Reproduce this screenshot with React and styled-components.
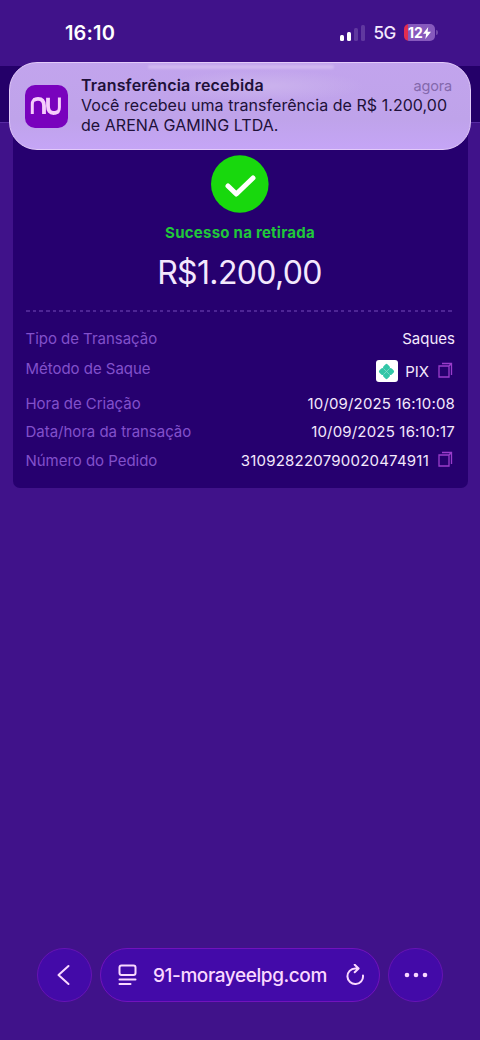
import React from "react";
import styled, { createGlobalStyle } from "styled-components";

const GlobalStyle = createGlobalStyle`
  * { box-sizing: border-box; }
  body {
    margin: 0;
    background: #40128a;
    font-family: Inter, "Liberation Sans", sans-serif;
  }
`;

const Screen = styled.div`
  position: relative;
  display: flex;
  flex-direction: column;
  width: 480px;
  height: 1040px;
  overflow: hidden;
  background: #40128a;
  color: #f4e8fd;
  white-space: nowrap;
`;

const StatusBar = styled.header`
  display: flex;
  flex: none;
  justify-content: space-between;
  align-items: center;
  height: 66px;
  padding: 0 42px 0 65px;
`;

const Clock = styled.span`
  font-size: 20px;
  font-weight: 600;
  letter-spacing: 0.15px;
  color: #fff;
`;

const StatusIcons = styled.div`
  display: flex;
  align-items: center;
  margin-top: -1px;
`;

const Signal = styled.div`
  display: flex;
  align-items: flex-end;
  gap: 3px;
  height: 16px;
  margin-right: 8px;
`;

const Bar = styled.i`
  width: 4px;
  height: ${(p) => p.$h}px;
  border-radius: 1.5px;
  background: ${(p) => (p.$on ? "#fff" : "#60389f")};
`;

const Network = styled.span`
  margin-right: 8px;
  padding-top: 1px;
  font-size: 17px;
  font-weight: 500;
  letter-spacing: -0.3px;
`;

const Battery = styled.div`
  display: flex;
  align-items: center;
  justify-content: center;
  width: 31px;
  height: 17px;
  border-radius: 5px;
  background: linear-gradient(90deg, #e22d50 4px, #8659bd 4px);
  color: #fff;
  font-size: 14px;
  font-weight: 700;
`;

const BatteryTip = styled.i`
  width: 2px;
  height: 5px;
  margin-left: 1px;
  border-radius: 0 2px 2px 0;
  background: #7048aa;
`;

const PageHeader = styled.div`
  flex: none;
  height: 57px;
  background: #240069;
  border-bottom: 1px solid #582ba3;
`;

const Receipt = styled.main`
  display: flex;
  flex: none;
  flex-direction: column;
  align-items: center;
  height: 365px;
  margin: 0 12px 0 13px;
  padding: 32px 13px 0;
  border-radius: 0 0 7px 7px;
  background: #26006f;
`;

const SuccessIcon = styled.svg`
  display: block;
  flex: none;
  width: 58px;
  height: 58px;
  margin-right: 1px;
`;

const SuccessText = styled.div`
  margin-top: 10px;
  margin-right: 1px;
  font-size: 15px;
  font-weight: 700;
  line-height: 20px;
  letter-spacing: 0.25px;
  color: #20c83a;
`;

const Amount = styled.div`
  margin-top: 10px;
  margin-right: 2px;
  font-size: 32px;
  line-height: 40px;
  letter-spacing: -0.65px;
`;

const Divider = styled.div`
  width: 100%;
  height: 2px;
  margin: 17px 0 12.5px;
  background: repeating-linear-gradient(90deg, #4d2594 0 3.5px, transparent 3.5px 6.7px);
`;

const Details = styled.dl`
  width: 100%;
  margin: 0;
`;

const Row = styled.div`
  display: flex;
  justify-content: space-between;
  align-items: center;
  height: ${(p) => p.$height || 28.5}px;
  font-size: 15px;
`;

const Label = styled.dt`
  margin-left: -0.5px;
  letter-spacing: -0.03px;
  color: #8250cb;
  transform: translateY(${(p) => p.$rise || 0}px);
`;

const Value = styled.dd`
  display: flex;
  align-items: center;
  margin: 0;
  letter-spacing: ${(p) => p.$tracking || 0}px;
`;

const PixBadge = styled.span`
  display: flex;
  align-items: center;
  justify-content: center;
  width: 22.5px;
  height: 22.5px;
  margin-right: 7px;
  border-radius: 3px;
  background: #fff;
`;

const CopySvg = styled.svg`
  width: 15px;
  height: 16px;
  margin: 0 2px 2px 9px;
`;

const Banner = styled.aside`
  position: absolute;
  top: 62px;
  left: 9px;
  display: flex;
  align-items: center;
  width: 462px;
  height: 88px;
  padding: 0 18px 0 15px;
  border: 1.5px solid #e3cbfa;
  border-radius: 28px;
  background:
    radial-gradient(ellipse 100px 16px at 255px 23px, #cab1ed 10%, transparent 100%),
    linear-gradient(#c2a4ed, #bfa3ea 65%, #c5a5f6);
  color: #201039;
`;

const Sheen = styled.i`
  position: absolute;
  top: 2px;
  left: 138px;
  width: 186px;
  height: 4px;
  border-radius: 3px;
  background: #d0b7f0;
  filter: blur(1px);
`;

const BankLogo = styled.svg`
  flex: none;
  width: 43px;
  height: 43px;
  margin-right: 13px;
`;

const BannerCopy = styled.div`
  flex: 1;
  margin-top: -2px;
  font-size: 16px;
  line-height: 20px;
`;

const BannerTop = styled.div`
  display: flex;
  justify-content: space-between;
`;

const BannerTitle = styled.strong`
  font-weight: 600;
  letter-spacing: 0.2px;
`;

const BannerTime = styled.time`
  font-size: 14.5px;
  letter-spacing: -0.15px;
  line-height: 22px;
  height: 20px;
  color: #8469ad;
`;

const BannerLine = styled.div`
  letter-spacing: 0.045px;
`;

const BrowserBar = styled.nav`
  display: flex;
  gap: 8px;
  margin-top: auto;
  padding: 0 37px 38px;
`;

const RoundButton = styled.button`
  display: flex;
  align-items: center;
  justify-content: center;
  width: 55px;
  height: 54px;
  padding: 0;
  border: 1px solid #6613b4;
  border-radius: 27px;
  background: #430aa8;
  color: #fad8ff;
`;

const AddressBar = styled.div`
  display: flex;
  flex: 1;
  align-items: center;
  height: 54px;
  padding: 0 14px 0 16px;
  border: 1px solid #7212bd;
  border-radius: 27px;
  background: #430aa9;
  color: #fad8ff;
`;

const Address = styled.span`
  flex: 1;
  margin-left: 16px;
  font-size: 19px;
  font-weight: 500;
  letter-spacing: -0.42px;
`;

const Glyph = styled.svg`
  display: block;
  flex: none;
  fill: none;
  stroke: currentColor;
  stroke-width: 2;
  stroke-linecap: round;
  stroke-linejoin: round;
`;

function CopyIcon() {
  return (
    <CopySvg viewBox="0 0 15 16" fill="none" stroke="#9a3ccb" strokeWidth="1.3">
      <path d="M1 4h10v11H1zM4 1.5h9.5V13M11 4l2.5-2.5" />
    </CopySvg>
  );
}

function PixIcon() {
  return (
    <svg width="17" height="17" viewBox="0 0 17 17">
      <g fill="#32c6a7">
        <rect x="5.6" y="1.5" width="5.8" height="5.8" rx="1.6" transform="rotate(45 8.5 4.4)" />
        <rect x="5.6" y="9.7" width="5.8" height="5.8" rx="1.6" transform="rotate(45 8.5 12.6)" />
        <rect x="1.5" y="5.6" width="5.8" height="5.8" rx="1.6" transform="rotate(45 4.4 8.5)" />
        <rect x="9.7" y="5.6" width="5.8" height="5.8" rx="1.6" transform="rotate(45 12.6 8.5)" />
        <path d="M5 5h7v7H5z" />
      </g>
      <path d="M5.5 5.5l6 6M11.5 5.5l-6 6" stroke="#8fe0cf" strokeWidth=".7" />
    </svg>
  );
}

export default function App() {
  return (
    <>
      <GlobalStyle />
      <Screen>
        <StatusBar>
          <Clock>16:10</Clock>
          <StatusIcons>
            <Signal>
              <Bar $h={6} $on />
              <Bar $h={9} $on />
              <Bar $h={13} />
              <Bar $h={16} />
            </Signal>
            <Network>5G</Network>
            <Battery>
              12
              <svg width="8" height="12" viewBox="0 0 8 12">
                <path d="M5.2 0L0 6.8h3.2L2.3 12 8 4.8H4.6z" fill="#fff" />
              </svg>
            </Battery>
            <BatteryTip />
          </StatusIcons>
        </StatusBar>
        <PageHeader />
        <Receipt>
          <SuccessIcon viewBox="0 0 58 58">
            <circle cx="28.8" cy="29" r="28.8" fill="#18d80d" />
            <path d="M17 31l8.3 8L42 23" fill="none" stroke="#fff" strokeWidth="5" strokeLinecap="round" strokeLinejoin="round" />
          </SuccessIcon>
          <SuccessText>Sucesso na retirada</SuccessText>
          <Amount>R$1.200,00</Amount>
          <Divider />
          <Details>
            <Row>
              <Label>Tipo de Transação</Label>
              <Value>Saques</Value>
            </Row>
            <Row $height={36}>
              <Label $rise={-3.5}>Método de Saque</Label>
              <Value>
                <PixBadge><PixIcon /></PixBadge>
                PIX
                <CopyIcon />
              </Value>
            </Row>
            <Row>
              <Label>Hora de Criação</Label>
              <Value $tracking={0.15}>10/09/2025 16:10:08</Value>
            </Row>
            <Row>
              <Label>Data/hora da transação</Label>
              <Value $tracking={0.18}>10/09/2025 16:10:17</Value>
            </Row>
            <Row>
              <Label>Número do Pedido</Label>
              <Value $tracking={0.22}>310928220790020474911<CopyIcon /></Value>
            </Row>
          </Details>
        </Receipt>
        <BrowserBar>
          <RoundButton aria-label="Voltar">
            <Glyph width="16" height="22" viewBox="0 0 16 22">
              <path d="M11.5 2L1.5 11l10 9" />
            </Glyph>
          </RoundButton>
          <AddressBar>
            <Glyph width="20" height="22" viewBox="0 0 20 22">
              <rect x="2.5" y="1.5" width="16" height="9.5" rx="2" />
              <path d="M2.5 15.5h16M2.5 20h11" />
            </Glyph>
            <Address>91-morayeelpg.com</Address>
            <Glyph width="20" height="22" viewBox="0 0 20 22">
              <path d="M18 11.5A7.8 7.8 0 1 1 10.2 4.5H13.5M9.7 .8L13.6 4.5 9.7 8.3" />
            </Glyph>
          </AddressBar>
          <RoundButton aria-label="Mais">
            <Glyph width="24" height="6" viewBox="0 0 24 6">
              <g fill="currentColor" stroke="none">
                <circle cx="3" cy="3" r="2.3" />
                <circle cx="12" cy="3" r="2.3" />
                <circle cx="21" cy="3" r="2.3" />
              </g>
            </Glyph>
          </RoundButton>
        </BrowserBar>
        <Banner>
          <Sheen />
          <BankLogo viewBox="0 0 43 43">
            <rect width="43" height="43" rx="10" fill="#7902bd" />
            <g fill="none" stroke="#f5cdfb">
              <path d="M7.3 29V19.5C7.3 16 9 14.3 11.5 14.3" strokeWidth="3" />
              <path d="M9 15c1.2-1 2.6-1.2 4-1.2 4 0 6 2.6 6 7V29" strokeWidth="3.8" />
              <path d="M23 12.8V21c0 4.8 2 7 5.600 7 1.400 0 2.800-.4 4-1.300" strokeWidth="3.8" />
              <path d="M30 27.800c2.600 0 4.400-2 4.400-5.500V12.500" strokeWidth="3" />
            </g>
          </BankLogo>
          <BannerCopy>
            <BannerTop>
              <BannerTitle>Transferência recebida</BannerTitle>
              <BannerTime>agora</BannerTime>
            </BannerTop>
            <BannerLine>Você recebeu uma transferência de R$ 1.200,00</BannerLine>
            <BannerLine>de ARENA GAMING LTDA.</BannerLine>
          </BannerCopy>
        </Banner>
      </Screen>
    </>
  );
}
